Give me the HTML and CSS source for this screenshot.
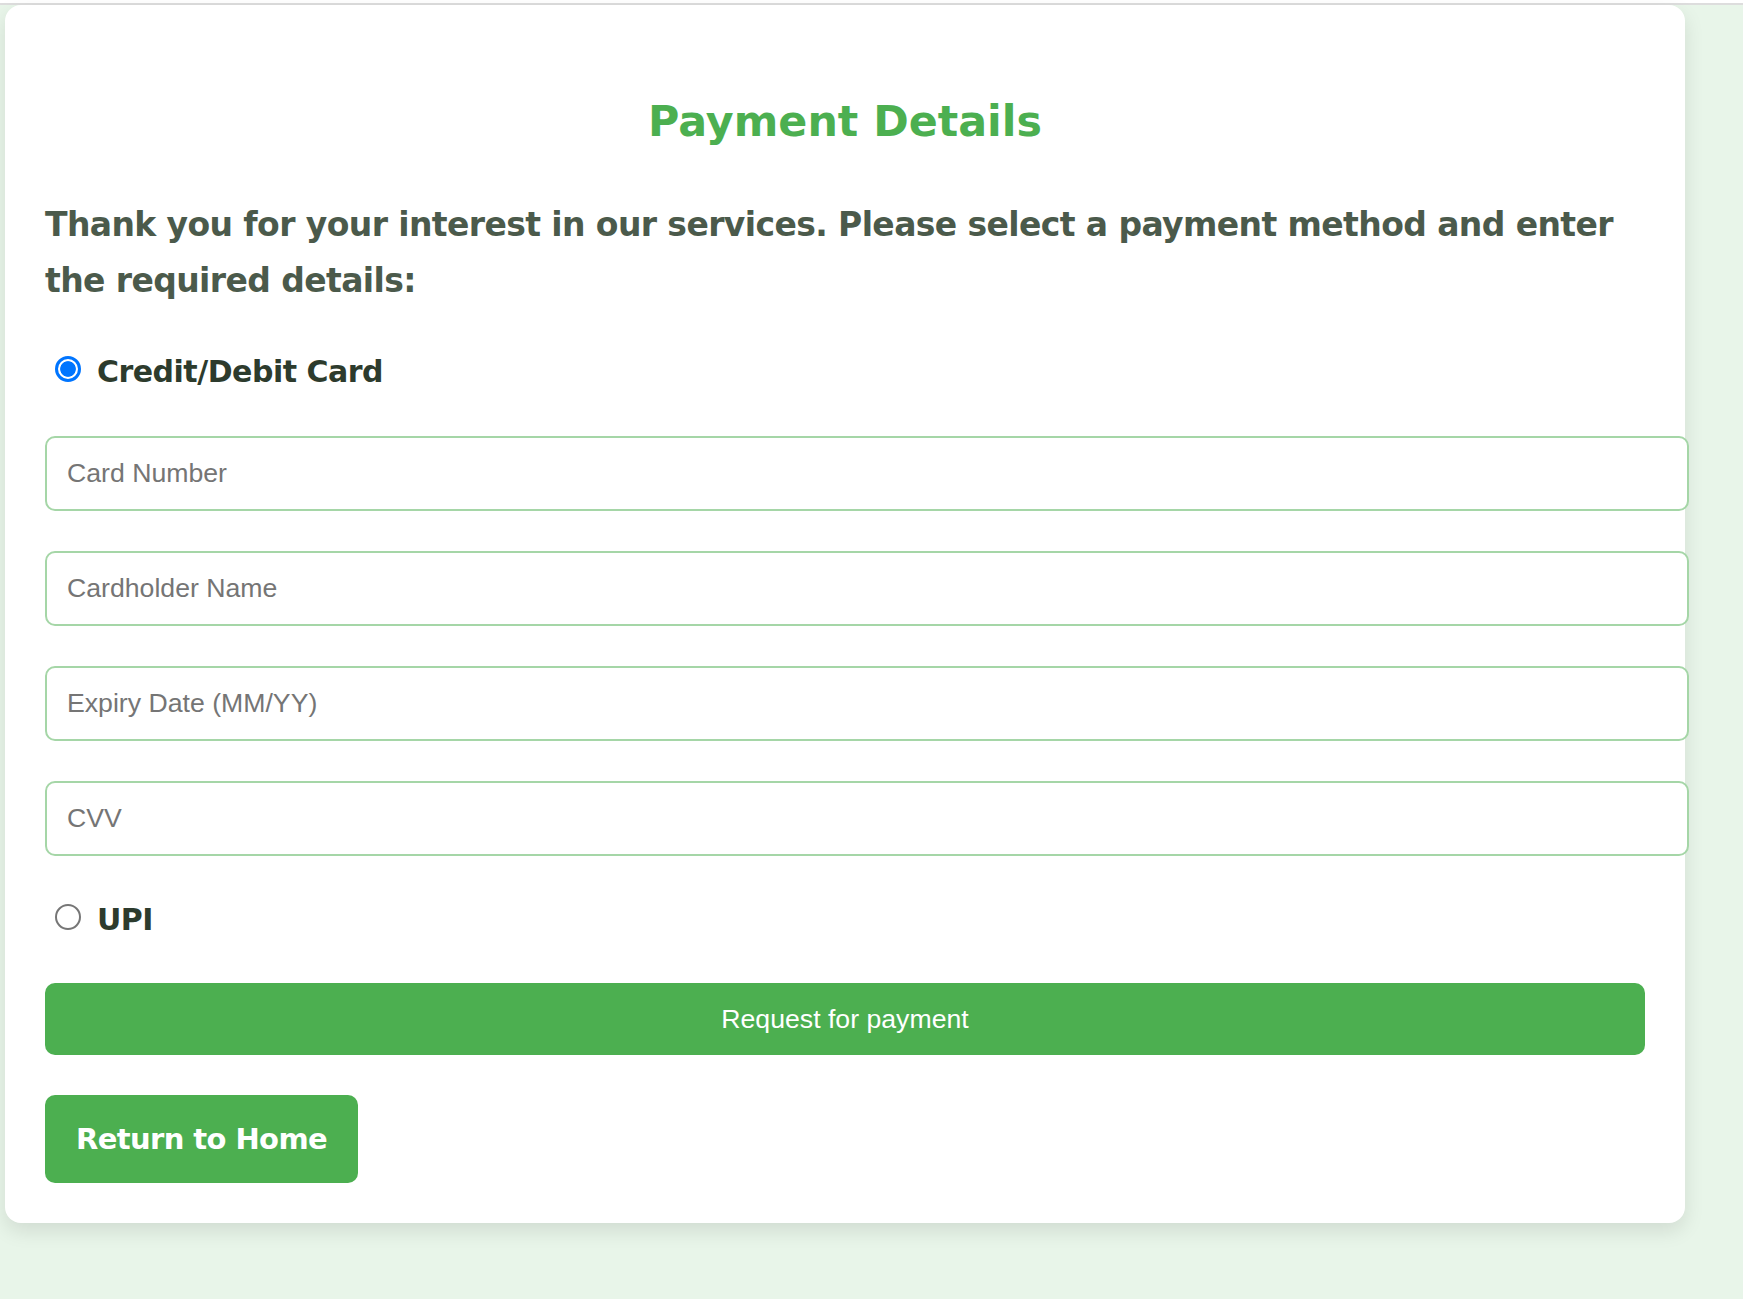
FILE: index.html
```html
<!DOCTYPE html>
<html lang="en">
<head>
<meta charset="utf-8">
<title>Payment Details</title>
<link rel="stylesheet" href="styles.css">
</head>
<body>
<div class="topbar"></div>
<main class="card">
  <h2 class="title">Payment Details</h2>
  <p class="intro">Thank you for your interest in our services. Please select a payment method and enter the required details:</p>
  <label class="method"><input class="radio" type="radio" name="method" checked> Credit/Debit Card</label>
  <div class="fields">
    <input class="field" type="text" placeholder="Card Number">
    <input class="field" type="text" placeholder="Cardholder Name">
    <input class="field" type="text" placeholder="Expiry Date (MM/YY)">
    <input class="field" type="text" placeholder="CVV">
  </div>
  <label class="method method-upi"><input class="radio" type="radio" name="method"> UPI</label>
  <button class="pay-btn" type="button">Request for payment</button>
  <div class="home-row"><a class="home-btn" href="#">Return to Home</a></div>
</main>
</body>
</html>
```

FILE: styles.css
```css
html, body {
  margin: 0;
  padding: 0;
}

body {
  background: #e8f5e9;
  font-family: "DejaVu Sans", "Open Sans", sans-serif;
  min-height: 1299px;
}

.topbar {
  height: 3px;
  background: #ffffff;
  border-bottom: 2px solid #dddddd;
}

.card {
  display: block;
  width: 1600px;
  margin: 0 0 0 5px;
  padding: 0 40px 40px;
  background: #ffffff;
  border-radius: 16px;
  box-shadow: 0 8px 20px rgba(0, 0, 0, 0.1);
}

.title {
  margin: 0;
  padding-top: 90px;
  font-size: 42.8px;
  line-height: 52px;
  font-weight: bold;
  color: #4caf50;
  text-align: center;
}

.intro {
  margin: 50px 0 0;
  font-size: 33px;
  letter-spacing: -0.6px;
  line-height: 56px;
  font-weight: bold;
  color: #4b5a4b;
}

.method {
  display: block;
  margin-top: 39px;
  font-size: 30px;
  letter-spacing: -0.5px;
  line-height: 48px;
  font-weight: bold;
  color: #2d3b2d;
}

.method-upi {
  margin-top: 40px;
}

.radio {
  -webkit-appearance: none;
  appearance: none;
  box-sizing: border-box;
  width: 26px;
  height: 26px;
  margin: 6px 6px 0 10px;
  border: 2px solid #767676;
  border-radius: 50%;
  background: #ffffff;
  vertical-align: baseline;
}

.radio:checked {
  border: 3px solid #0075ff;
  background: radial-gradient(circle at center, #0075ff 7.4px, #ffffff 8.2px);
}

.fields {
  display: flex;
  flex-direction: column;
  align-items: flex-start;
  gap: 40px;
  margin-top: 40px;
}

.field {
  box-sizing: content-box;
  width: 100%;
  margin: 0;
  padding: 20px;
  border: 2px solid #a5d6a7;
  border-radius: 10px;
  font-family: "Liberation Sans", Arial, sans-serif;
  font-size: 26.67px;
  color: #333333;
  background: #ffffff;
  outline: none;
}

.field::placeholder {
  color: #757575;
}

.pay-btn {
  display: block;
  width: 100%;
  margin-top: 39px;
  padding: 20.5px 0;
  border: none;
  border-radius: 10px;
  background: #4caf50;
  color: #ffffff;
  font-family: "Liberation Sans", Arial, sans-serif;
  font-size: 26.67px;
  cursor: pointer;
}

.home-row {
  display: flex;
  margin-top: 40px;
}

.home-btn {
  display: inline-block;
  padding: 20px 31px;
  border-radius: 10px;
  background: #4caf50;
  color: #ffffff;
  font-size: 29px;
  letter-spacing: -0.6px;
  line-height: 48px;
  font-weight: bold;
  text-decoration: none;
}
```
